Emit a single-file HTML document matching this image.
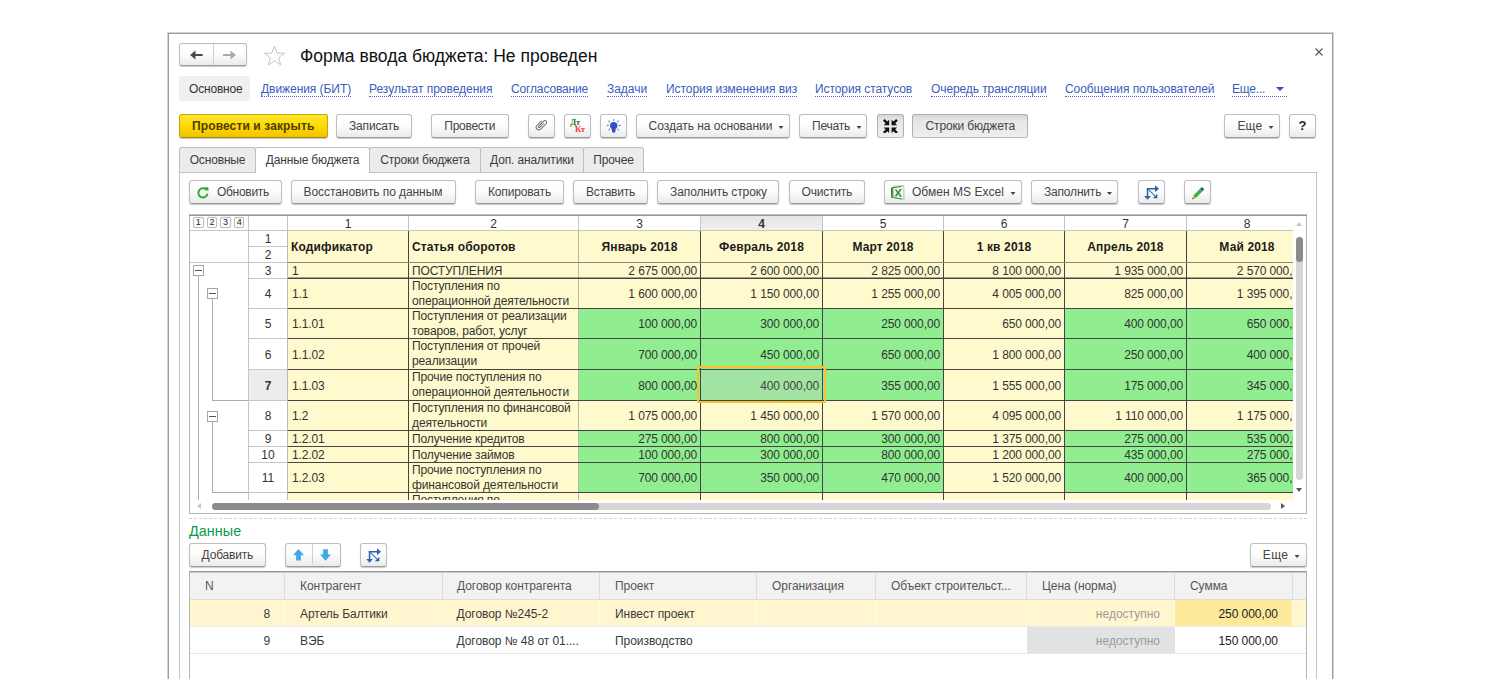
<!DOCTYPE html><html lang="ru"><head><meta charset="utf-8"><title>Форма ввода бюджета</title><style>
*{box-sizing:border-box;margin:0;padding:0}
html,body{width:1501px;height:679px;overflow:hidden;background:#fff}
body{position:relative;font-family:"Liberation Sans",Arial,sans-serif;font-size:12px;color:#333}
.a{position:absolute}
.btn{position:absolute;height:24px;border:1px solid #bdbdbd;border-bottom-color:#9b9b9b;border-radius:3px;background:linear-gradient(#ffffff 0%,#fdfdfd 45%,#ebebeb 100%);box-shadow:0 1px 1px rgba(0,0,0,.22);color:#444;white-space:nowrap;font-size:12px;line-height:22px}
.btn.y{background:linear-gradient(#ffe733 0%,#ffd900 50%,#f0c400 100%);border-color:#caa500;border-bottom-color:#a88800;color:#4d3d00;font-weight:bold}
.btn.p{background:linear-gradient(#d6d6d6 0%,#e5e5e5 22%,#eeeeee 100%);border-color:#b0b0b0;border-bottom-color:#b8b8b8;box-shadow:none}
.btn span{position:absolute;top:0}
.car{position:absolute;width:5px;height:3px;background:#444;clip-path:polygon(0 0,100% 0,50% 100%)}
.lnk{position:absolute;top:83px;color:#3b5bbd;font-size:12px;white-space:nowrap;line-height:13px;border-bottom:1px dotted #4a68c4}
.tab{position:absolute;top:147px;height:25px;background:#ececec;border:1px solid #bebebe;border-bottom:none;border-radius:3px 3px 0 0;text-align:center;line-height:24px;color:#3c3c3c;white-space:nowrap}
.tab.act{background:#fff;height:26px;z-index:3}
.cell{position:absolute;overflow:hidden;white-space:nowrap;color:#333;font-size:12px;letter-spacing:-0.12px}
.num{text-align:right;padding-right:4px}
.yl{background:#fffacd}
.gr{background:#90ee90}
.sel{background:#a1e3a1;color:#444}
.hl{position:absolute;background:#444;height:1px}
.vl{position:absolute;background:#444;width:1px}
.gl{position:absolute;background:#c6c6c6}
.rn{position:absolute;text-align:center;color:#333;font-size:12px}
.t2h{position:absolute;top:571.5px;height:28px;line-height:28px;color:#555;white-space:nowrap;letter-spacing:-0.05px}
.t2c{position:absolute;height:26px;line-height:26px;color:#3a3a3a;white-space:nowrap;letter-spacing:-0.05px}
</style></head><body>
<div class="a" style="left:168px;top:33px;width:1165px;height:700px;border:1px solid #9d9d9d;border-bottom:none;box-shadow:0 0 0 1px rgba(150,150,150,.42)"></div>
<div class="btn" style="left:179px;top:43px;width:68px;height:23px"></div>
<div class="a" style="left:213px;top:44px;width:1px;height:21px;background:#d0d0d0"></div>
<svg class="a" style="left:186px;top:49px" width="56" height="12" viewBox="0 0 56 12"><path d="M4 6 L9.5 1.6 V4.9 H16.7 V7.1 H9.5 V10.4 Z" fill="#4a4a4a"/><path d="M50 6 L44.5 1.6 V4.9 H37 V7.1 H44.5 V10.4 Z" fill="#aaaaaa"/></svg>
<svg class="a" style="left:262px;top:43px" width="25" height="24" viewBox="0 0 25 24"><path d="M12.5 3 L15.1 10 L22.6 10.2 L16.7 14.8 L18.8 22 L12.5 17.8 L6.2 22 L8.3 14.8 L2.4 10.2 L9.9 10 Z" fill="#fff" stroke="#c4c4c4" stroke-width="1"/></svg>
<div class="a" style="left:300px;top:44px;font-size:17.5px;line-height:24px;color:#111;white-space:nowrap;letter-spacing:0.006px">Форма ввода бюджета: Не проведен</div>
<svg class="a" style="left:1314px;top:47px" width="10" height="10" viewBox="0 0 10 10"><path d="M1.5 1.5 L8.5 8.5 M8.5 1.5 L1.5 8.5" stroke="#555" stroke-width="1.1" fill="none"/></svg>
<div class="a" style="left:179px;top:76px;width:71px;height:25px;background:#f0f0f0;border-radius:3px"></div>
<div class="a" style="left:189px;top:83px;color:#333;line-height:13px;white-space:nowrap;letter-spacing:-0.186px">Основное</div>
<div class="lnk" style="left:261px;letter-spacing:-0.056px">Движения (БИТ)</div>
<div class="lnk" style="left:369px;letter-spacing:-0.021px">Результат проведения</div>
<div class="lnk" style="left:511px;letter-spacing:-0.147px">Согласование</div>
<div class="lnk" style="left:607px;letter-spacing:-0.033px">Задачи</div>
<div class="lnk" style="left:666px;letter-spacing:-0.045px">История изменения виз</div>
<div class="lnk" style="left:815px;letter-spacing:-0.077px">История статусов</div>
<div class="lnk" style="left:931px;letter-spacing:-0.094px">Очередь трансляции</div>
<div class="lnk" style="left:1065px;letter-spacing:-0.08px">Сообщения пользователей</div>
<div class="lnk" style="left:1232px;width:55px;letter-spacing:-0.2px">Еще...</div>
<div class="a" style="left:1276px;top:87px;width:0;height:0;border-left:4px solid transparent;border-right:4px solid transparent;border-top:4px solid #2b50c0"></div>
<div class="btn y" style="left:179px;top:114px;width:149px"><span style="left:12px;letter-spacing:0.116px">Провести и закрыть</span></div>
<div class="btn " style="left:336px;top:114px;width:76px"><span style="left:12px;letter-spacing:-0.16px">Записать</span></div>
<div class="btn " style="left:431px;top:114px;width:78px"><span style="left:12.3px;letter-spacing:-0.262px">Провести</span></div>
<div class="btn " style="left:528px;top:114px;width:27px"></div>
<div class="btn " style="left:564px;top:114px;width:27px"></div>
<div class="btn " style="left:600px;top:114px;width:27px"></div>
<div class="btn " style="left:636px;top:114px;width:154px"><span style="left:11.6px;letter-spacing:-0.035px">Создать на основании</span><i class="car" style="left:141.5px;top:11px"></i></div>
<div class="btn " style="left:799px;top:114px;width:68px"><span style="left:12px;letter-spacing:-0.219px">Печать</span><i class="car" style="left:56.5px;top:11px"></i></div>
<div class="btn p" style="left:877px;top:114px;width:27px"></div>
<div class="btn p" style="left:912px;top:114px;width:116px"><span style="left:12.6px;letter-spacing:-0.168px">Строки бюджета</span></div>
<div class="btn " style="left:1224px;top:114px;width:56px"><span style="left:12.4px;letter-spacing:0.193px">Еще</span><i class="car" style="left:43.5px;top:11px"></i></div>
<div class="btn" style="left:1289px;top:114px;width:27px;font-weight:bold;font-size:13px;color:#222;text-align:center">?</div>
<div class="a" style="left:179px;top:172px;width:1138px;height:600px;border:1px solid #c4c4c4;border-bottom:none"></div>
<div class="tab" style="left:179px;width:77px;letter-spacing:-0.15px">Основные</div>
<div class="tab act" style="left:255px;width:115px;letter-spacing:-0.15px">Данные бюджета</div>
<div class="tab" style="left:369px;width:112px;letter-spacing:-0.15px">Строки бюджета</div>
<div class="tab" style="left:480px;width:104px;letter-spacing:-0.15px">Доп. аналитики</div>
<div class="tab" style="left:583px;width:61px;letter-spacing:-0.15px">Прочее</div>
<div class="btn " style="left:189px;top:180px;width:93px"><span style="left:27px;letter-spacing:-0.293px">Обновить</span></div>
<div class="btn " style="left:291px;top:180px;width:165px"><span style="left:11.6px;letter-spacing:-0.077px">Восстановить по данным</span></div>
<div class="btn " style="left:475px;top:180px;width:89px"><span style="left:12px;letter-spacing:-0.163px">Копировать</span></div>
<div class="btn " style="left:573px;top:180px;width:75px"><span style="left:12px;letter-spacing:-0.234px">Вставить</span></div>
<div class="btn " style="left:657px;top:180px;width:122px"><span style="left:12px;letter-spacing:-0.093px">Заполнить строку</span></div>
<div class="btn " style="left:789px;top:180px;width:76px"><span style="left:11.6px;letter-spacing:-0.231px">Очистить</span></div>
<div class="btn " style="left:884px;top:180px;width:138px"><span style="left:27px;letter-spacing:0.035px">Обмен MS Excel</span><i class="car" style="left:125.5px;top:11px"></i></div>
<div class="btn " style="left:1031px;top:180px;width:87px"><span style="left:12px;letter-spacing:-0.191px">Заполнить</span><i class="car" style="left:75px;top:11px"></i></div>
<div class="btn " style="left:1138px;top:180px;width:27px"></div>
<div class="btn " style="left:1184px;top:180px;width:27px"></div>
<svg class="a" style="left:532.3px;top:116.2px" width="18" height="18" viewBox="0 0 18 18"><g transform="rotate(45 9 9) translate(0.9 0.9) scale(0.9)"><path d="M6.2 5.2 V12.6 a2.9 2.9 0 0 0 5.8 0 V3.9 a2 2 0 0 0 -4 0 V11.8 a0.9 0.9 0 0 0 1.8 0 V5.4" fill="none" stroke="#6e6e6e" stroke-width="1.05"/></g></svg>
<div class="a" style="left:570.3px;top:117px;font-family:'Liberation Serif',serif;font-weight:bold;font-size:8.7px;line-height:10px;color:#1c7c1c;letter-spacing:-0.3px">Дт</div>
<div class="a" style="left:575px;top:123.7px;font-family:'Liberation Serif',serif;font-weight:bold;font-size:8.7px;line-height:10px;color:#f23a3a;letter-spacing:-0.3px">Кт</div>
<svg class="a" style="left:605.3px;top:117.6px" width="18" height="18" viewBox="0 0 18 18"><g fill="#3b4fc4"><circle cx="8.7" cy="7.6" r="3.7"/><path d="M6.6 9.5 H10.8 L10.3 14 Q8.7 15.6 7.1 14 Z"/></g><g stroke="#6f7fd8" stroke-width="1.1" stroke-linecap="round"><path d="M8.7 1.4 V2.4 M3.9 2.9 L4.7 3.8 M13.5 2.9 L12.7 3.8 M2.2 7.4 H3.3 M14.1 7.4 H15.2 M3.9 11.8 L4.7 11.1 M13.5 11.8 L12.7 11.1"/></g></svg>
<svg class="a" style="left:883.1px;top:118.6px" width="14.8" height="14.8" viewBox="0 0 14.8 14.8"><g fill="#111"><path d="M6.2 6.2 V0.7 L4.3 2.6 L1.7 0 L0 1.7 L2.6 4.3 L0.7 6.2 Z"/><g transform="translate(14.8 0) scale(-1 1)"><path d="M6.2 6.2 V0.7 L4.3 2.6 L1.7 0 L0 1.7 L2.6 4.3 L0.7 6.2 Z"/></g><g transform="translate(0 14.8) scale(1 -1)"><path d="M6.2 6.2 V0.7 L4.3 2.6 L1.7 0 L0 1.7 L2.6 4.3 L0.7 6.2 Z"/></g><g transform="translate(14.8 14.8) scale(-1 -1)"><path d="M6.2 6.2 V0.7 L4.3 2.6 L1.7 0 L0 1.7 L2.6 4.3 L0.7 6.2 Z"/></g></g></svg>
<svg class="a" style="left:196px;top:186px" width="14" height="14" viewBox="0 0 14 14"><path d="M10.6 4.1 A4.6 4.6 0 1 0 11.5 7.6" fill="none" stroke="#2fad2f" stroke-width="2"/><path d="M8 1.2 L12.4 1.2 L12.4 5.6 Z" fill="#2fad2f"/></svg>
<svg class="a" style="left:889.5px;top:184.5px" width="15" height="15.5" viewBox="0 0 15 15.5"><path d="M3.2 1.2 L13.8 0.6 L14 14.2 L3.4 12.6 Z" fill="#f4f6f4" stroke="#9ab89a" stroke-width="0.8"/><path d="M1 2.4 L11.6 1 V1.9 L2.9 3.2 V12 L11.6 13.4 V14.4 L1 12.6 Z" fill="#2f8d2f"/><path d="M4.6 4.6 L6.9 4.4 L8.2 6.7 L9.6 4.1 L11.9 3.9 L9.4 7.8 L12.1 11.9 L9.8 11.7 L8.2 9 L6.7 11.4 L4.5 11.2 L7 7.8 Z" fill="#3a9a3a"/></svg>
<svg class="a" style="left:1144px;top:184.8px" width="15" height="15" viewBox="0 0 15 15"><g fill="#2a62b0" stroke="none"><path d="M2.8 3 H11 V0.2 L15 3.7 L11 7.2 V4.4 H2.8 Z"/><path d="M2.8 3 H4.3 V11 H6.9 L3.55 14.8 L0.2 11 H2.8 Z"/><path d="M13.3 13.3 V8.8 L8.8 13.3 Z"/><path d="M4.2 4.9 L4.9 4.2 L11.6 10.9 L10.9 11.6 Z"/></g></svg>
<svg class="a" style="left:1190.5px;top:186.8px" width="13.6" height="13.2" viewBox="0 0 15 14.5"><path d="M1.3 13.4 L2.6 9.3 L5.4 12.1 Z" fill="#f0a830"/><path d="M1.3 13.4 L1.8 11.7 L3 12.9 Z" fill="#222"/><path d="M2.6 9.3 L10.2 1.7 L13 4.5 L5.4 12.1 Z" fill="#3cb34a"/><path d="M10.2 1.7 L11.3 0.6 Q12 0 12.7 0.7 L14 2 Q14.6 2.7 14 3.4 L13 4.5 Z" fill="#39475a"/></svg>
<div class="a" style="left:189px;top:214px;width:1118px;height:300px;border:1px solid #b4b4b4;border-top:1px solid #c0c0c0"></div>
<div class="a" style="left:189px;top:215px;width:1118px;height:1px;background:#989898"></div>
<div class="a" style="left:190px;top:216px;width:1103px;height:284px;overflow:hidden">
<div class="rn" style="left:98px;top:0;width:120px;height:14px;line-height:17px;background:#fff;font-weight:normal">1</div>
<div class="gl" style="left:218px;top:0;width:1px;height:14px"></div>
<div class="rn" style="left:219px;top:0;width:169px;height:14px;line-height:17px;background:#fff;font-weight:normal">2</div>
<div class="gl" style="left:388px;top:0;width:1px;height:14px"></div>
<div class="rn" style="left:389px;top:0;width:121px;height:14px;line-height:17px;background:#fff;font-weight:normal">3</div>
<div class="gl" style="left:510px;top:0;width:1px;height:14px"></div>
<div class="rn" style="left:511px;top:0;width:121px;height:14px;line-height:17px;background:linear-gradient(#e6e6e6,#efefef);font-weight:bold">4</div>
<div class="gl" style="left:632px;top:0;width:1px;height:14px"></div>
<div class="rn" style="left:633px;top:0;width:120px;height:14px;line-height:17px;background:#fff;font-weight:normal">5</div>
<div class="gl" style="left:753px;top:0;width:1px;height:14px"></div>
<div class="rn" style="left:754px;top:0;width:120px;height:14px;line-height:17px;background:#fff;font-weight:normal">6</div>
<div class="gl" style="left:874px;top:0;width:1px;height:14px"></div>
<div class="rn" style="left:875px;top:0;width:121px;height:14px;line-height:17px;background:#fff;font-weight:normal">7</div>
<div class="gl" style="left:996px;top:0;width:1px;height:14px"></div>
<div class="rn" style="left:997px;top:0;width:120px;height:14px;line-height:17px;background:#fff;font-weight:normal">8</div>
<div class="gl" style="left:1117px;top:0;width:1px;height:14px"></div>
<div class="gl" style="left:0;top:14px;width:1200px;height:1px"></div>
<div class="gl" style="left:58px;top:0;width:1px;height:300px"></div>
<div class="gl" style="left:97px;top:0;width:1px;height:300px"></div>
<div class="a" style="left:3px;top:1px;width:10.5px;height:11px;border:1px solid #bdbdbd;border-radius:2px;font-size:9px;line-height:9.5px;text-align:center;color:#222;background:#fcfcfc;box-shadow:0 0 1px rgba(0,0,0,.2)">1</div>
<div class="a" style="left:16.65px;top:1px;width:10.5px;height:11px;border:1px solid #bdbdbd;border-radius:2px;font-size:9px;line-height:9.5px;text-align:center;color:#222;background:#fcfcfc;box-shadow:0 0 1px rgba(0,0,0,.2)">2</div>
<div class="a" style="left:30.3px;top:1px;width:10.5px;height:11px;border:1px solid #bdbdbd;border-radius:2px;font-size:9px;line-height:9.5px;text-align:center;color:#222;background:#fcfcfc;box-shadow:0 0 1px rgba(0,0,0,.2)">3</div>
<div class="a" style="left:43.95px;top:1px;width:10.5px;height:11px;border:1px solid #bdbdbd;border-radius:2px;font-size:9px;line-height:9.5px;text-align:center;color:#222;background:#fcfcfc;box-shadow:0 0 1px rgba(0,0,0,.2)">4</div>
<div class="rn" style="left:59px;top:15px;width:38px;height:15px;line-height:17px">1</div>
<div class="rn" style="left:59px;top:31px;width:38px;height:15px;line-height:17px">2</div>
<div class="gl" style="left:58px;top:30px;width:39px;height:1px"></div>
<div class="gl" style="left:0;top:46px;width:98px;height:1px"></div>
<div class="cell yl" style="left:98px;top:15px;width:120px;height:32px;line-height:33px;font-weight:bold;text-align:left;padding-left:3px;letter-spacing:0.13px;color:#1c1c1c">Кодификатор</div>
<div class="cell yl" style="left:219px;top:15px;width:169px;height:32px;line-height:33px;font-weight:bold;text-align:left;padding-left:3px;letter-spacing:0.13px;color:#1c1c1c">Статья оборотов</div>
<div class="cell yl" style="left:389px;top:15px;width:121px;height:32px;line-height:33px;font-weight:bold;text-align:center;letter-spacing:0.13px;color:#1c1c1c">Январь 2018</div>
<div class="cell yl" style="left:511px;top:15px;width:121px;height:32px;line-height:33px;font-weight:bold;text-align:center;letter-spacing:0.13px;color:#1c1c1c">Февраль 2018</div>
<div class="cell yl" style="left:633px;top:15px;width:120px;height:32px;line-height:33px;font-weight:bold;text-align:center;letter-spacing:0.13px;color:#1c1c1c">Март 2018</div>
<div class="cell yl" style="left:754px;top:15px;width:120px;height:32px;line-height:33px;font-weight:bold;text-align:center;letter-spacing:0.13px;color:#1c1c1c">1 кв 2018</div>
<div class="cell yl" style="left:875px;top:15px;width:121px;height:32px;line-height:33px;font-weight:bold;text-align:center;letter-spacing:0.13px;color:#1c1c1c">Апрель 2018</div>
<div class="cell yl" style="left:997px;top:15px;width:120px;height:32px;line-height:33px;font-weight:bold;text-align:center;letter-spacing:0.13px;color:#1c1c1c">Май 2018</div>
<div class="rn" style="left:59px;top:47px;width:38px;height:15px;line-height:17px;">3</div>
<div class="gl" style="left:58px;top:62px;width:39px;height:1px"></div>
<div class="cell yl" style="left:98px;top:47px;width:121px;height:16px;line-height:17px;padding-left:4px">1</div>
<div class="cell yl" style="left:219px;top:47px;width:170px;height:16px;line-height:17px;padding-left:3px">ПОСТУПЛЕНИЯ</div>
<div class="cell num yl" style="left:389px;top:47px;width:122px;height:16px;line-height:17px">2 675 000,00</div>
<div class="cell num yl" style="left:511px;top:47px;width:122px;height:16px;line-height:17px">2 600 000,00</div>
<div class="cell num yl" style="left:633px;top:47px;width:121px;height:16px;line-height:17px">2 825 000,00</div>
<div class="cell num yl" style="left:754px;top:47px;width:121px;height:16px;line-height:17px">8 100 000,00</div>
<div class="cell num yl" style="left:875px;top:47px;width:122px;height:16px;line-height:17px">1 935 000,00</div>
<div class="cell num yl" style="left:997px;top:47px;width:121px;height:16px;line-height:17px;padding-right:2.5px">2 570 000,00</div>
<div class="rn" style="left:59px;top:63px;width:38px;height:29px;line-height:31px;">4</div>
<div class="gl" style="left:58px;top:92px;width:39px;height:1px"></div>
<div class="cell yl" style="left:98px;top:63px;width:121px;height:30px;line-height:31px;padding-left:4px">1.1</div>
<div class="cell yl" style="left:219px;top:63px;width:170px;height:30px;line-height:15px;padding-left:3px"><div>Поступления по<br>операционной деятельности</div></div>
<div class="cell num yl" style="left:389px;top:63px;width:122px;height:30px;line-height:31px">1 600 000,00</div>
<div class="cell num yl" style="left:511px;top:63px;width:122px;height:30px;line-height:31px">1 150 000,00</div>
<div class="cell num yl" style="left:633px;top:63px;width:121px;height:30px;line-height:31px">1 255 000,00</div>
<div class="cell num yl" style="left:754px;top:63px;width:121px;height:30px;line-height:31px">4 005 000,00</div>
<div class="cell num yl" style="left:875px;top:63px;width:122px;height:30px;line-height:31px">825 000,00</div>
<div class="cell num yl" style="left:997px;top:63px;width:121px;height:30px;line-height:31px;padding-right:2.5px">1 395 000,00</div>
<div class="rn" style="left:59px;top:93px;width:38px;height:29px;line-height:31px;">5</div>
<div class="gl" style="left:58px;top:122px;width:39px;height:1px"></div>
<div class="cell yl" style="left:98px;top:93px;width:121px;height:30px;line-height:31px;padding-left:4px">1.1.01</div>
<div class="cell yl" style="left:219px;top:93px;width:170px;height:30px;line-height:15px;padding-left:3px"><div>Поступления от реализации<br>товаров, работ, услуг</div></div>
<div class="cell num gr" style="left:389px;top:93px;width:122px;height:30px;line-height:31px">100 000,00</div>
<div class="cell num gr" style="left:511px;top:93px;width:122px;height:30px;line-height:31px">300 000,00</div>
<div class="cell num gr" style="left:633px;top:93px;width:121px;height:30px;line-height:31px">250 000,00</div>
<div class="cell num yl" style="left:754px;top:93px;width:121px;height:30px;line-height:31px">650 000,00</div>
<div class="cell num gr" style="left:875px;top:93px;width:122px;height:30px;line-height:31px">400 000,00</div>
<div class="cell num gr" style="left:997px;top:93px;width:121px;height:30px;line-height:31px;padding-right:2.5px">650 000,00</div>
<div class="rn" style="left:59px;top:123px;width:38px;height:30px;line-height:32px;">6</div>
<div class="gl" style="left:58px;top:153px;width:39px;height:1px"></div>
<div class="cell yl" style="left:98px;top:123px;width:121px;height:31px;line-height:32px;padding-left:4px">1.1.02</div>
<div class="cell yl" style="left:219px;top:123px;width:170px;height:31px;line-height:15px;padding-left:3px"><div>Поступления от прочей<br>реализации</div></div>
<div class="cell num gr" style="left:389px;top:123px;width:122px;height:31px;line-height:32px">700 000,00</div>
<div class="cell num gr" style="left:511px;top:123px;width:122px;height:31px;line-height:32px">450 000,00</div>
<div class="cell num gr" style="left:633px;top:123px;width:121px;height:31px;line-height:32px">650 000,00</div>
<div class="cell num yl" style="left:754px;top:123px;width:121px;height:31px;line-height:32px">1 800 000,00</div>
<div class="cell num gr" style="left:875px;top:123px;width:122px;height:31px;line-height:32px">250 000,00</div>
<div class="cell num gr" style="left:997px;top:123px;width:121px;height:31px;line-height:32px;padding-right:2.5px">400 000,00</div>
<div class="rn" style="left:59px;top:154px;width:38px;height:30px;line-height:32px;background:#ececec;font-weight:bold;">7</div>
<div class="gl" style="left:58px;top:184px;width:39px;height:1px"></div>
<div class="cell yl" style="left:98px;top:154px;width:121px;height:31px;line-height:32px;padding-left:4px">1.1.03</div>
<div class="cell yl" style="left:219px;top:154px;width:170px;height:31px;line-height:15px;padding-left:3px"><div>Прочие поступления по<br>операционной деятельности</div></div>
<div class="cell num gr" style="left:389px;top:154px;width:122px;height:31px;line-height:32px">800 000,00</div>
<div class="cell num sel" style="left:511px;top:154px;width:122px;height:31px;line-height:32px">400 000,00</div>
<div class="cell num gr" style="left:633px;top:154px;width:121px;height:31px;line-height:32px">355 000,00</div>
<div class="cell num yl" style="left:754px;top:154px;width:121px;height:31px;line-height:32px">1 555 000,00</div>
<div class="cell num gr" style="left:875px;top:154px;width:122px;height:31px;line-height:32px">175 000,00</div>
<div class="cell num gr" style="left:997px;top:154px;width:121px;height:31px;line-height:32px;padding-right:2.5px">345 000,00</div>
<div class="rn" style="left:59px;top:185px;width:38px;height:29px;line-height:31px;">8</div>
<div class="gl" style="left:58px;top:214px;width:39px;height:1px"></div>
<div class="cell yl" style="left:98px;top:185px;width:121px;height:30px;line-height:31px;padding-left:4px">1.2</div>
<div class="cell yl" style="left:219px;top:185px;width:170px;height:30px;line-height:15px;padding-left:3px"><div>Поступления по финансовой<br>деятельности</div></div>
<div class="cell num yl" style="left:389px;top:185px;width:122px;height:30px;line-height:31px">1 075 000,00</div>
<div class="cell num yl" style="left:511px;top:185px;width:122px;height:30px;line-height:31px">1 450 000,00</div>
<div class="cell num yl" style="left:633px;top:185px;width:121px;height:30px;line-height:31px">1 570 000,00</div>
<div class="cell num yl" style="left:754px;top:185px;width:121px;height:30px;line-height:31px">4 095 000,00</div>
<div class="cell num yl" style="left:875px;top:185px;width:122px;height:30px;line-height:31px">1 110 000,00</div>
<div class="cell num yl" style="left:997px;top:185px;width:121px;height:30px;line-height:31px;padding-right:2.5px">1 175 000,00</div>
<div class="rn" style="left:59px;top:215px;width:38px;height:15px;line-height:17px;">9</div>
<div class="gl" style="left:58px;top:230px;width:39px;height:1px"></div>
<div class="cell yl" style="left:98px;top:215px;width:121px;height:16px;line-height:17px;padding-left:4px">1.2.01</div>
<div class="cell yl" style="left:219px;top:215px;width:170px;height:16px;line-height:17px;padding-left:3px">Получение кредитов</div>
<div class="cell num gr" style="left:389px;top:215px;width:122px;height:16px;line-height:17px">275 000,00</div>
<div class="cell num gr" style="left:511px;top:215px;width:122px;height:16px;line-height:17px">800 000,00</div>
<div class="cell num gr" style="left:633px;top:215px;width:121px;height:16px;line-height:17px">300 000,00</div>
<div class="cell num yl" style="left:754px;top:215px;width:121px;height:16px;line-height:17px">1 375 000,00</div>
<div class="cell num gr" style="left:875px;top:215px;width:122px;height:16px;line-height:17px">275 000,00</div>
<div class="cell num gr" style="left:997px;top:215px;width:121px;height:16px;line-height:17px;padding-right:2.5px">535 000,00</div>
<div class="rn" style="left:59px;top:231px;width:38px;height:15px;line-height:17px;">10</div>
<div class="gl" style="left:58px;top:246px;width:39px;height:1px"></div>
<div class="cell yl" style="left:98px;top:231px;width:121px;height:16px;line-height:17px;padding-left:4px">1.2.02</div>
<div class="cell yl" style="left:219px;top:231px;width:170px;height:16px;line-height:17px;padding-left:3px">Получение займов</div>
<div class="cell num gr" style="left:389px;top:231px;width:122px;height:16px;line-height:17px">100 000,00</div>
<div class="cell num gr" style="left:511px;top:231px;width:122px;height:16px;line-height:17px">300 000,00</div>
<div class="cell num gr" style="left:633px;top:231px;width:121px;height:16px;line-height:17px">800 000,00</div>
<div class="cell num yl" style="left:754px;top:231px;width:121px;height:16px;line-height:17px">1 200 000,00</div>
<div class="cell num gr" style="left:875px;top:231px;width:122px;height:16px;line-height:17px">435 000,00</div>
<div class="cell num gr" style="left:997px;top:231px;width:121px;height:16px;line-height:17px;padding-right:2.5px">275 000,00</div>
<div class="rn" style="left:59px;top:247px;width:38px;height:29px;line-height:31px;">11</div>
<div class="gl" style="left:58px;top:276px;width:39px;height:1px"></div>
<div class="cell yl" style="left:98px;top:247px;width:121px;height:30px;line-height:31px;padding-left:4px">1.2.03</div>
<div class="cell yl" style="left:219px;top:247px;width:170px;height:30px;line-height:15px;padding-left:3px"><div>Прочие поступления по<br>финансовой деятельности</div></div>
<div class="cell num gr" style="left:389px;top:247px;width:122px;height:30px;line-height:31px">700 000,00</div>
<div class="cell num gr" style="left:511px;top:247px;width:122px;height:30px;line-height:31px">350 000,00</div>
<div class="cell num gr" style="left:633px;top:247px;width:121px;height:30px;line-height:31px">470 000,00</div>
<div class="cell num yl" style="left:754px;top:247px;width:121px;height:30px;line-height:31px">1 520 000,00</div>
<div class="cell num gr" style="left:875px;top:247px;width:122px;height:30px;line-height:31px">400 000,00</div>
<div class="cell num gr" style="left:997px;top:247px;width:121px;height:30px;line-height:31px;padding-right:2.5px">365 000,00</div>
<div class="rn" style="left:59px;top:277px;width:38px;height:30px;line-height:32px;"></div>
<div class="gl" style="left:58px;top:307px;width:39px;height:1px"></div>
<div class="cell yl" style="left:98px;top:277px;width:121px;height:31px;line-height:32px;padding-left:4px"></div>
<div class="cell yl" style="left:219px;top:277px;width:170px;height:31px;line-height:15px;padding-left:3px"><div>Поступления по<br>инвестиционной деятельности</div></div>
<div class="cell num yl" style="left:389px;top:277px;width:122px;height:31px;line-height:32px"></div>
<div class="cell num yl" style="left:511px;top:277px;width:122px;height:31px;line-height:32px"></div>
<div class="cell num yl" style="left:633px;top:277px;width:121px;height:31px;line-height:32px"></div>
<div class="cell num yl" style="left:754px;top:277px;width:121px;height:31px;line-height:32px"></div>
<div class="cell num yl" style="left:875px;top:277px;width:122px;height:31px;line-height:32px"></div>
<div class="cell num yl" style="left:997px;top:277px;width:121px;height:31px;line-height:32px;padding-right:2.5px"></div>
<div class="vl" style="left:218px;top:15px;height:300px;background:#444"></div>
<div class="vl" style="left:388px;top:15px;height:300px;background:#b9b6a6"></div>
<div class="vl" style="left:510px;top:15px;height:300px;background:#444"></div>
<div class="vl" style="left:632px;top:15px;height:300px;background:#444"></div>
<div class="vl" style="left:753px;top:15px;height:300px;background:#444"></div>
<div class="vl" style="left:874px;top:15px;height:300px;background:#444"></div>
<div class="vl" style="left:996px;top:15px;height:300px;background:#444"></div>
<div class="vl" style="left:1117px;top:15px;height:300px;background:#444"></div>
<div class="vl" style="left:97px;top:15px;height:300px;background:#b9b9b0"></div>
<div class="hl" style="left:98px;top:46px;width:1100px;background:#8a8a80"></div>
<div class="hl" style="left:98px;top:62px;width:1100px;background:#444"></div>
<div class="hl" style="left:98px;top:92px;width:1100px;background:#444"></div>
<div class="hl" style="left:98px;top:122px;width:1100px;background:#444"></div>
<div class="hl" style="left:98px;top:153px;width:1100px;background:#444"></div>
<div class="hl" style="left:98px;top:184px;width:1100px;background:#444"></div>
<div class="hl" style="left:98px;top:214px;width:1100px;background:#444"></div>
<div class="hl" style="left:98px;top:230px;width:1100px;background:#444"></div>
<div class="hl" style="left:98px;top:246px;width:1100px;background:#444"></div>
<div class="hl" style="left:98px;top:276px;width:1100px;background:#444"></div>
<div class="hl" style="left:98px;top:307px;width:1100px;background:#444"></div>
<div class="hl" style="left:98px;top:61px;width:1100px;background:rgba(60,60,50,.45)"></div>
<div class="a" style="left:507px;top:150px;width:129px;height:37px;border:2px solid #f8c332"></div>
<div class="gl" style="left:8px;top:60px;width:1px;height:300px;background:#ababab"></div>
<div class="gl" style="left:22px;top:83px;width:1px;height:101px;background:#ababab"></div>
<div class="gl" style="left:22px;top:184px;width:36px;height:1px;background:#ababab"></div>
<div class="gl" style="left:22px;top:206px;width:1px;height:70px;background:#ababab"></div>
<div class="gl" style="left:22px;top:276px;width:36px;height:1px;background:#ababab"></div>
<div class="a" style="left:3px;top:49px;width:11px;height:11px;border:1px solid #a6a6a6;background:#fff"></div>
<div class="a" style="left:5px;top:54px;width:7px;height:1px;background:#555"></div>
<div class="a" style="left:17px;top:72px;width:11px;height:11px;border:1px solid #a6a6a6;background:#fff"></div>
<div class="a" style="left:19px;top:77px;width:7px;height:1px;background:#555"></div>
<div class="a" style="left:17px;top:195px;width:11px;height:11px;border:1px solid #a6a6a6;background:#fff"></div>
<div class="a" style="left:19px;top:200px;width:7px;height:1px;background:#555"></div>
</div>
<div class="a" style="left:1296px;top:237px;width:7px;height:243px;border-radius:4px;background:#d6d6d6"></div>
<div class="a" style="left:1296px;top:237px;width:7px;height:25px;border-radius:4px;background:#8c8c8c"></div>
<div class="a" style="left:1296px;top:222px;width:0;height:0;border-left:3.5px solid transparent;border-right:3.5px solid transparent;border-bottom:4px solid #c8c8c8"></div>
<div class="a" style="left:1296px;top:488px;width:0;height:0;border-left:3.5px solid transparent;border-right:3.5px solid transparent;border-top:4px solid #555"></div>
<div class="a" style="left:212px;top:503px;width:1059px;height:7px;border-radius:4px;background:#d6d6d6"></div>
<div class="a" style="left:212px;top:503px;width:387px;height:7px;border-radius:4px;background:#8c8c8c"></div>
<div class="a" style="left:197px;top:503px;width:0;height:0;border-top:3.5px solid transparent;border-bottom:3.5px solid transparent;border-right:4px solid #c8c8c8"></div>
<div class="a" style="left:1281px;top:503px;width:0;height:0;border-top:3.5px solid transparent;border-bottom:3.5px solid transparent;border-left:4px solid #555"></div>
<div class="a" style="left:189px;top:518px;width:1118px;height:0;border-top:1px dashed #d2d2d2"></div>
<div class="a" style="left:189px;top:522px;font-size:14.4px;line-height:18px;color:#0a9b4a;white-space:nowrap;letter-spacing:0.05px">Данные</div>
<div class="btn " style="left:189px;top:543px;width:77px"><span style="left:11.6px;letter-spacing:-0.181px">Добавить</span></div>
<div class="btn " style="left:285px;top:543px;width:56px"></div>
<div class="a" style="left:312px;top:544px;width:1px;height:21px;background:#cfcfcf"></div>
<div class="btn " style="left:360px;top:543px;width:27px"></div>
<div class="btn " style="left:1250px;top:543px;width:57px"><span style="left:11.8px;letter-spacing:0.393px">Еще</span><i class="car" style="left:43.5px;top:11px"></i></div>
<svg class="a" style="left:293.3px;top:549.2px" width="11" height="12" viewBox="0 0 11 12"><path d="M5.5 0 L11 6.2 H7.9 V11.6 H3.1 V6.2 H0 Z" fill="#3fa8e6"/></svg>
<svg class="a" style="left:320px;top:549.2px" width="11" height="12" viewBox="0 0 11 12"><path d="M5.5 11.8 L11 5.6 H7.9 V0.2 H3.1 V5.6 H0 Z" fill="#3fa8e6"/></svg>
<svg class="a" style="left:365.8px;top:547.8px" width="15" height="15" viewBox="0 0 15 15"><g fill="#2a62b0" stroke="none"><path d="M2.8 3 H11 V0.2 L15 3.7 L11 7.2 V4.4 H2.8 Z"/><path d="M2.8 3 H4.3 V11 H6.9 L3.55 14.8 L0.2 11 H2.8 Z"/><path d="M13.3 13.3 V8.8 L8.8 13.3 Z"/><path d="M4.2 4.9 L4.9 4.2 L11.6 10.9 L10.9 11.6 Z"/></g></svg>
<div class="a" style="left:189px;top:571px;width:1118px;height:200px;border:1px solid #b4b4b4;border-top:1px solid #979797;border-bottom:none"></div>
<div class="a" style="left:190px;top:572px;width:1116px;height:1px;background:#c9c9c9"></div>
<div class="a" style="left:190px;top:573px;width:1116px;height:27px;background:#f2f2f2;border-bottom:1px solid #dedede"></div>
<div class="t2h" style="left:205px">N</div>
<div class="t2h" style="left:300px">Контрагент</div>
<div class="t2h" style="left:457px">Договор контрагента</div>
<div class="t2h" style="left:615px">Проект</div>
<div class="t2h" style="left:772px">Организация</div>
<div class="t2h" style="left:891px">Объект строительст...</div>
<div class="t2h" style="left:1042px">Цена (норма)</div>
<div class="t2h" style="left:1190px">Сумма</div>
<div class="a" style="left:284px;top:573px;width:1px;height:27px;background:#dcdcdc"></div>
<div class="a" style="left:442px;top:573px;width:1px;height:27px;background:#dcdcdc"></div>
<div class="a" style="left:599px;top:573px;width:1px;height:27px;background:#dcdcdc"></div>
<div class="a" style="left:756px;top:573px;width:1px;height:27px;background:#dcdcdc"></div>
<div class="a" style="left:875px;top:573px;width:1px;height:27px;background:#dcdcdc"></div>
<div class="a" style="left:1026px;top:573px;width:1px;height:27px;background:#dcdcdc"></div>
<div class="a" style="left:1174px;top:573px;width:1px;height:27px;background:#dcdcdc"></div>
<div class="a" style="left:1292px;top:573px;width:1px;height:27px;background:#dcdcdc"></div>
<div class="a" style="left:190px;top:600px;width:1116px;height:26px;background:#fff6d0"></div>
<div class="a" style="left:1175px;top:600px;width:118px;height:26px;background:#fde99a"></div>
<div class="a" style="left:284px;top:600px;width:1px;height:26px;background:#fffbe6"></div>
<div class="a" style="left:442px;top:600px;width:1px;height:26px;background:#fffbe6"></div>
<div class="a" style="left:599px;top:600px;width:1px;height:26px;background:#fffbe6"></div>
<div class="a" style="left:756px;top:600px;width:1px;height:26px;background:#fffbe6"></div>
<div class="a" style="left:875px;top:600px;width:1px;height:26px;background:#fffbe6"></div>
<div class="a" style="left:1026px;top:600px;width:1px;height:26px;background:#fffbe6"></div>
<div class="a" style="left:1174px;top:600px;width:1px;height:26px;background:#fffbe6"></div>
<div class="a" style="left:1292px;top:600px;width:1px;height:26px;background:#fffbe6"></div>
<div class="a" style="left:1027px;top:627px;width:148px;height:26px;background:#e2e2e2"></div>
<div class="a" style="left:190px;top:626px;width:1116px;height:1px;background:#ebebeb"></div>
<div class="a" style="left:190px;top:653px;width:1116px;height:1px;background:#e6e6e6"></div>
<div class="t2c" style="left:190px;top:601px;width:80px;text-align:right">8</div>
<div class="t2c" style="left:300px;top:601px">Артель Балтики</div>
<div class="t2c" style="left:456.5px;top:601px">Договор №245-2</div>
<div class="t2c" style="left:615px;top:601px">Инвест проект</div>
<div class="t2c" style="left:1027px;top:601px;width:133px;text-align:right;color:#9c9c9c;letter-spacing:0">недоступно</div>
<div class="t2c" style="left:1175px;top:601px;width:103px;text-align:right;color:#222">250 000,00</div>
<div class="t2c" style="left:190px;top:627.5px;width:80px;text-align:right">9</div>
<div class="t2c" style="left:300px;top:627.5px">ВЭБ</div>
<div class="t2c" style="left:456.5px;top:627.5px">Договор № 48 от 01....</div>
<div class="t2c" style="left:615px;top:627.5px">Производство</div>
<div class="t2c" style="left:1027px;top:627.5px;width:133px;text-align:right;color:#9c9c9c;letter-spacing:0">недоступно</div>
<div class="t2c" style="left:1175px;top:627.5px;width:103px;text-align:right;color:#222">150 000,00</div>
</body></html>
